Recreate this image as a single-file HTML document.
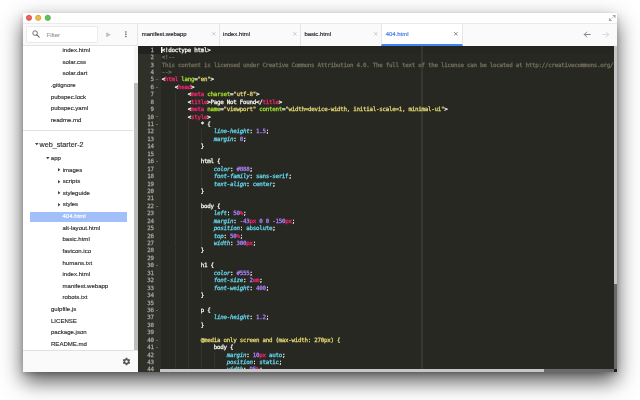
<!DOCTYPE html>
<html lang="en">
<head>
<meta charset="utf-8">
<title>Chrome Dev Editor</title>
<style>
html,body{margin:0;padding:0;}
body{width:640px;height:400px;overflow:hidden;background:#fff;position:relative;font-family:"Liberation Sans",sans-serif;}
#win{will-change:transform;position:absolute;left:23px;top:13px;width:594px;height:359px;background:#fff;box-shadow:0 9px 20px rgba(0,0,0,.68),0 2px 5px rgba(0,0,0,.18);}
#win>div,#win>svg{position:absolute;}
#title{left:0;top:0;width:594px;height:10px;background:#fff;}
.dot{position:absolute;top:1.90px;width:5.8px;height:5.8px;border-radius:50%;box-sizing:border-box;}
#toolbar{left:0;width:594px;top:10px;height:23px;background:#fafafa;border-top:1px solid #ebebeb;box-sizing:border-box;}
#filter{left:3px;top:13px;width:72px;height:17px;background:#fff;border:1px solid #ebebeb;box-sizing:border-box;border-radius:1px;}
#tbb{left:0;top:32px;width:115px;height:1px;background:#e3e3e3;}
#ftxt{left:23.6px;top:17.799999999999997px;font-size:6.1px;line-height:7px;color:#a2a2a2;-webkit-text-stroke:0.17px;}
.tab{top:11px;height:22px;box-sizing:border-box;border-left:1px solid #e6e6e6;font-size:5.95px;color:#1c1c1c;-webkit-text-stroke:0.15px;}
.tab .tl{position:absolute;left:3.4px;top:6.700000000000003px;line-height:7px;white-space:nowrap;}
.tab .tx{position:absolute;right:3.6px;top:8.10px;stroke:#b4b4b4;}
.tab.act{background:#fff;color:#3b78e7;border-bottom:2px solid #4285f4;border-right:1px solid #e6e6e6;}
.tab.act .tx{stroke:#4c4c4c;}
#side{left:0;top:33px;width:115px;height:304px;background:#fff;overflow:hidden;}
.row{position:absolute;font-size:6.05px;line-height:11px;height:11px;color:#2e2e2e;white-space:nowrap;-webkit-text-stroke:0.15px;margin-top:-33px;}
.selt{color:#fff !important;}
.selrow{position:absolute;left:7px;width:97px;height:10px;background:#a1c0fa;margin-top:-33px;}
.ar{position:absolute;top:3.9px;width:0;height:0;border-left:2.4px solid #4a4a4a;border-top:1.7px solid transparent;border-bottom:1.7px solid transparent;}
.ad{position:absolute;top:4.4px;width:0;height:0;border-top:2.2px solid #4a4a4a;border-left:1.8px solid transparent;border-right:1.8px solid transparent;}
#proj{position:absolute;left:16.6px;top:93.69999999999999px;font-size:7.2px;line-height:9px;color:#2e2e2e;white-space:nowrap;-webkit-text-stroke:0.15px;}
#divider{position:absolute;left:0;width:110px;top:84px;height:1px;background:#e2e2e2;}
#sfoot{left:0;top:337px;width:115px;height:22px;background:#fafafa;border-top:1px solid #e0e0e0;box-sizing:border-box;}
#sscroll{left:111px;top:33px;width:4px;height:304px;background:#f6f6f6;}
#sthumb{position:absolute;left:0;right:0;top:37px;bottom:0;background:#bdbdbd;}
#ed{left:115px;top:33px;width:479px;height:326px;background:#272822;overflow:hidden;font-family:"DejaVu Sans Mono","Liberation Mono",monospace;font-size:5.8px;letter-spacing:-0.242px;-webkit-text-stroke:0.25px;}
#ed div,#ed i{position:absolute;}
#gut{left:0;top:0;width:22.5px;bottom:0;background:#2f3129;}
#actg{left:0;top:0;width:22.5px;height:8.14px;background:#222320;}
#actl{left:22.5px;right:0;top:0;height:8.14px;background:#252620;}
.gn{left:0;width:15.7px;text-align:right;line-height:7.437px;height:7.437px;color:#a6a7a0;white-space:pre;}
.fold{left:17.6px;top:2.8px;width:2px;height:0.8px;background:#62635c;}
.ln{left:23.7px;line-height:7.437px;height:7.437px;white-space:pre;color:#f8f8f2;}
.t{color:#f8f8f2} .c{color:#75715e} .k{color:#f92672} .a{color:#a6e22e} .s{color:#e6db74}
.p{color:#66d9ef;font-style:italic} .u{color:#66d9ef} .n{color:#ae81ff}
#lines{left:0;top:0.7px;}
#gnums{left:0;top:0.7px;}
#pm{left:283px;top:0;bottom:0;width:2px;background:#363731;}
.ig{width:0.5px;background:#33342e;}
#cursor{left:23.00px;top:1px;width:1px;height:6px;background:#f8f8f0;box-shadow:1px 0 0 rgba(248,248,240,.45);}
#vs{right:0;top:0;width:3.5px;bottom:0;background:#6a6a6a;}
#vt{left:0;right:0;top:0;height:237.8px;background:#c6c6c6;}
#hs{left:22px;right:3.5px;bottom:0;height:3.5px;background:#6a6a6a;}
#ht{left:0;top:0;bottom:0;width:383.79999999999995px;background:#c6c6c6;}
#corner{right:0;bottom:0;width:3.5px;height:3.5px;background:#1e1e1e;}
svg{position:absolute;overflow:visible;}
</style>
</head>
<body>
<div id="win">
  <div id="title">
    <svg style="left:0;top:0" width="40" height="10" viewBox="0 0 40 10">
      <circle cx="6" cy="4.8" r="2.600" fill="#f4615b" stroke="#cb3f3a" stroke-width="0.700"/>
      <circle cx="15.2" cy="4.8" r="2.600" fill="#f6b93f" stroke="#cc922b" stroke-width="0.700"/>
      <circle cx="24.8" cy="4.8" r="2.600" fill="#62c656" stroke="#3f9b39" stroke-width="0.700"/>
    </svg>
    <svg style="left:586px;top:2px" width="6.500" height="6" viewBox="0 0 65 60"><path d="M33 0H65V32zM0 28V60H32z" fill="#a3a3a3"/><path d="M50 15L15 45" stroke="#b5b5b5" stroke-width="6" fill="none"/></svg>
  </div>
  <div id="toolbar"></div>
  <div id="tbb"></div>
  <div id="filter"></div>
  <svg style="left:9.200000000000003px;top:17.1px" width="8" height="8" viewBox="0 0 16 16"><circle cx="6.200" cy="6.200" r="4.600" fill="none" stroke="#5c5c5c" stroke-width="1.700"/><path d="M9.800 9.800L14.500 14.500" stroke="#5c5c5c" stroke-width="2.100" stroke-linecap="round"/></svg>
  <div id="ftxt">Filter</div>
  <svg style="left:82.6px;top:18.5px" width="5" height="5.500" viewBox="0 0 10 11"><path d="M0.500 0.300L9.500 5.500L0.500 10.700z" fill="#bdbdbd"/></svg>
  <svg style="left:102.4px;top:18.3px" width="1.800" height="6.400" viewBox="0 0 3.600 12.800"><circle cx="1.800" cy="1.800" r="1.500" fill="#4a4a4a"/><circle cx="1.800" cy="6.400" r="1.500" fill="#4a4a4a"/><circle cx="1.800" cy="11" r="1.500" fill="#4a4a4a"/></svg>
  <div class="tab" style="left:114.40px;width:81.30px"><span class="tl">manifest.webapp</span><svg class="tx" width="3.600" height="3.600" viewBox="0 0 36 36"><path d="M1 1L35 35M35 1L1 35" fill="none" stroke-width="6.500"/></svg></div><div class="tab" style="left:195.70px;width:81.30px"><span class="tl">index.html</span><svg class="tx" width="3.600" height="3.600" viewBox="0 0 36 36"><path d="M1 1L35 35M35 1L1 35" fill="none" stroke-width="6.500"/></svg></div><div class="tab" style="left:277.00px;width:81.30px"><span class="tl">basic.html</span><svg class="tx" width="3.600" height="3.600" viewBox="0 0 36 36"><path d="M1 1L35 35M35 1L1 35" fill="none" stroke-width="6.500"/></svg></div><div class="tab act" style="left:358.30px;width:81.30px"><span class="tl">404.html</span><svg class="tx" width="3.600" height="3.600" viewBox="0 0 36 36"><path d="M1 1L35 35M35 1L1 35" fill="none" stroke-width="6.500"/></svg></div>
  <svg style="left:560px;top:17px" width="8" height="9" viewBox="0 -1 16 18"><path d="M15 8H3M8 2.500L2.500 8l5.500 5.500" fill="none" stroke="#4a4a4a" stroke-width="1.350"/></svg>
  <svg style="left:579px;top:17px" width="8" height="9" viewBox="0 -1 16 18"><path d="M1 8h12M8 2.500l5.500 5.500-5.500 5.500" fill="none" stroke="#c6c6c6" stroke-width="1.350"/></svg>
  <div id="side">
    <div class="row" style="top:32.00px;left:39.50px">index.html</div><div class="row" style="top:43.50px;left:39.50px">solar.css</div><div class="row" style="top:55.00px;left:39.50px">solar.dart</div><div class="row" style="top:67.00px;left:27.80px">.gitignore</div><div class="row" style="top:78.50px;left:27.80px">pubspec.lock</div><div class="row" style="top:90.00px;left:27.80px">pubspec.yaml</div><div class="row" style="top:102.00px;left:27.80px">readme.md</div><div class="row" style="top:139.80px;left:27.80px"><svg style="left:-4.70px;top:4.40px" width="3.600" height="2.200" viewBox="0 0 36 22"><path d="M0 0H36L18 22z" fill="#444"/></svg>app</div><div class="row" style="top:151.50px;left:39.70px"><svg style="left:-4.40px;top:3.90px" width="2.400" height="3.400" viewBox="0 0 24 34"><path d="M0 0V34L24 17z" fill="#444"/></svg>images</div><div class="row" style="top:163.00px;left:39.70px"><svg style="left:-4.40px;top:3.90px" width="2.400" height="3.400" viewBox="0 0 24 34"><path d="M0 0V34L24 17z" fill="#444"/></svg>scripts</div><div class="row" style="top:174.50px;left:39.70px"><svg style="left:-4.40px;top:3.90px" width="2.400" height="3.400" viewBox="0 0 24 34"><path d="M0 0V34L24 17z" fill="#444"/></svg>styleguide</div><div class="row" style="top:186.00px;left:39.70px"><svg style="left:-4.40px;top:3.90px" width="2.400" height="3.400" viewBox="0 0 24 34"><path d="M0 0V34L24 17z" fill="#444"/></svg>styles</div><div class="selrow" style="top:199.00px"></div><div class="row selt" style="top:198.00px;left:39.50px">404.html</div><div class="row" style="top:209.50px;left:39.50px">alt-layout.html</div><div class="row" style="top:221.00px;left:39.50px">basic.html</div><div class="row" style="top:232.50px;left:39.50px">favicon.ico</div><div class="row" style="top:244.50px;left:39.50px">humans.txt</div><div class="row" style="top:256.00px;left:39.50px">index.html</div><div class="row" style="top:267.50px;left:39.50px">manifest.webapp</div><div class="row" style="top:279.20px;left:39.50px">robots.txt</div><div class="row" style="top:290.80px;left:28.00px">gulpfile.js</div><div class="row" style="top:302.50px;left:28.00px">LICENSE</div><div class="row" style="top:314.20px;left:28.00px">package.json</div><div class="row" style="top:325.80px;left:28.00px">README.md</div>
    <div id="divider"></div>
    <div id="proj"><svg style="left:-5.00px;top:3.20px" width="3.600" height="2.200" viewBox="0 0 36 22"><path d="M0 0H36L18 22z" fill="#444"/></svg>web_starter-2</div>
  </div>
  <div id="sscroll"><div id="sthumb"></div></div>
  <div id="sfoot">
    <svg style="left:98.9px;top:5.6px" width="9" height="9" viewBox="0 0 24 24"><path fill="#555" d="M19.430 12.980c.040-.320.070-.640.070-.980s-.030-.660-.070-.980l2.110-1.650c.190-.150.240-.420.120-.640l-2-3.460c-.120-.220-.390-.300-.610-.220l-2.490 1c-.520-.400-1.080-.730-1.690-.980l-.380-2.650C14.460 2.180 14.250 2 14 2h-4c-.250 0-.460.180-.490.420l-.380 2.650c-.610.250-1.170.590-1.690.980l-2.490-1c-.230-.090-.490 0-.610.220l-2 3.460c-.130.220-.070.490.120.640l2.110 1.650c-.040.320-.070.650-.070.980s.030.660.070.980l-2.110 1.650c-.190.150-.240.420-.120.640l2 3.460c.120.220.390.300.610.220l2.490-1c.520.400 1.080.730 1.690.980l.380 2.650c.030.240.240.420.490.420h4c.250 0 .460-.180.490-.420l.380-2.650c.610-.250 1.170-.590 1.690-.980l2.490 1c.230.090.490 0 .610-.220l2-3.460c.120-.220.070-.490-.120-.640l-2.110-1.650zM12 15.500c-1.930 0-3.500-1.570-3.500-3.500s1.570-3.500 3.500-3.500 3.500 1.570 3.500 3.500-1.570 3.500-3.500 3.500z"/></svg>
  </div>
  <div id="ed">
    <div id="gut"></div>
    <div id="actg"></div>
    <div id="actl"></div>
    <div id="pm"></div>
    <div id="guides"><i class="ig" style="left:36.70px;top:45.32px;height:7.44px"></i><i class="ig" style="left:36.70px;top:52.76px;height:7.44px"></i><i class="ig" style="left:36.70px;top:60.20px;height:7.44px"></i><i class="ig" style="left:36.70px;top:67.63px;height:7.44px"></i><i class="ig" style="left:36.70px;top:75.07px;height:7.44px"></i><i class="ig" style="left:49.70px;top:75.07px;height:7.44px"></i><i class="ig" style="left:36.70px;top:82.51px;height:7.44px"></i><i class="ig" style="left:49.70px;top:82.51px;height:7.44px"></i><i class="ig" style="left:62.70px;top:82.51px;height:7.44px"></i><i class="ig" style="left:36.70px;top:89.94px;height:7.44px"></i><i class="ig" style="left:49.70px;top:89.94px;height:7.44px"></i><i class="ig" style="left:62.70px;top:89.94px;height:7.44px"></i><i class="ig" style="left:36.70px;top:97.38px;height:7.44px"></i><i class="ig" style="left:49.70px;top:97.38px;height:7.44px"></i><i class="ig" style="left:36.70px;top:104.82px;height:7.44px"></i><i class="ig" style="left:49.70px;top:104.82px;height:7.44px"></i><i class="ig" style="left:36.70px;top:112.26px;height:7.44px"></i><i class="ig" style="left:49.70px;top:112.26px;height:7.44px"></i><i class="ig" style="left:36.70px;top:119.69px;height:7.44px"></i><i class="ig" style="left:49.70px;top:119.69px;height:7.44px"></i><i class="ig" style="left:62.70px;top:119.69px;height:7.44px"></i><i class="ig" style="left:36.70px;top:127.13px;height:7.44px"></i><i class="ig" style="left:49.70px;top:127.13px;height:7.44px"></i><i class="ig" style="left:62.70px;top:127.13px;height:7.44px"></i><i class="ig" style="left:36.70px;top:134.57px;height:7.44px"></i><i class="ig" style="left:49.70px;top:134.57px;height:7.44px"></i><i class="ig" style="left:62.70px;top:134.57px;height:7.44px"></i><i class="ig" style="left:36.70px;top:142.00px;height:7.44px"></i><i class="ig" style="left:49.70px;top:142.00px;height:7.44px"></i><i class="ig" style="left:36.70px;top:149.44px;height:7.44px"></i><i class="ig" style="left:49.70px;top:149.44px;height:7.44px"></i><i class="ig" style="left:36.70px;top:156.88px;height:7.44px"></i><i class="ig" style="left:49.70px;top:156.88px;height:7.44px"></i><i class="ig" style="left:36.70px;top:164.31px;height:7.44px"></i><i class="ig" style="left:49.70px;top:164.31px;height:7.44px"></i><i class="ig" style="left:62.70px;top:164.31px;height:7.44px"></i><i class="ig" style="left:36.70px;top:171.75px;height:7.44px"></i><i class="ig" style="left:49.70px;top:171.75px;height:7.44px"></i><i class="ig" style="left:62.70px;top:171.75px;height:7.44px"></i><i class="ig" style="left:36.70px;top:179.19px;height:7.44px"></i><i class="ig" style="left:49.70px;top:179.19px;height:7.44px"></i><i class="ig" style="left:62.70px;top:179.19px;height:7.44px"></i><i class="ig" style="left:36.70px;top:186.62px;height:7.44px"></i><i class="ig" style="left:49.70px;top:186.62px;height:7.44px"></i><i class="ig" style="left:62.70px;top:186.62px;height:7.44px"></i><i class="ig" style="left:36.70px;top:194.06px;height:7.44px"></i><i class="ig" style="left:49.70px;top:194.06px;height:7.44px"></i><i class="ig" style="left:62.70px;top:194.06px;height:7.44px"></i><i class="ig" style="left:36.70px;top:201.50px;height:7.44px"></i><i class="ig" style="left:49.70px;top:201.50px;height:7.44px"></i><i class="ig" style="left:36.70px;top:208.94px;height:7.44px"></i><i class="ig" style="left:49.70px;top:208.94px;height:7.44px"></i><i class="ig" style="left:36.70px;top:216.37px;height:7.44px"></i><i class="ig" style="left:49.70px;top:216.37px;height:7.44px"></i><i class="ig" style="left:36.70px;top:223.81px;height:7.44px"></i><i class="ig" style="left:49.70px;top:223.81px;height:7.44px"></i><i class="ig" style="left:62.70px;top:223.81px;height:7.44px"></i><i class="ig" style="left:36.70px;top:231.25px;height:7.44px"></i><i class="ig" style="left:49.70px;top:231.25px;height:7.44px"></i><i class="ig" style="left:62.70px;top:231.25px;height:7.44px"></i><i class="ig" style="left:36.70px;top:238.68px;height:7.44px"></i><i class="ig" style="left:49.70px;top:238.68px;height:7.44px"></i><i class="ig" style="left:62.70px;top:238.68px;height:7.44px"></i><i class="ig" style="left:36.70px;top:246.12px;height:7.44px"></i><i class="ig" style="left:49.70px;top:246.12px;height:7.44px"></i><i class="ig" style="left:36.70px;top:253.56px;height:7.44px"></i><i class="ig" style="left:49.70px;top:253.56px;height:7.44px"></i><i class="ig" style="left:36.70px;top:261.00px;height:7.44px"></i><i class="ig" style="left:49.70px;top:261.00px;height:7.44px"></i><i class="ig" style="left:36.70px;top:268.43px;height:7.44px"></i><i class="ig" style="left:49.70px;top:268.43px;height:7.44px"></i><i class="ig" style="left:62.70px;top:268.43px;height:7.44px"></i><i class="ig" style="left:36.70px;top:275.87px;height:7.44px"></i><i class="ig" style="left:49.70px;top:275.87px;height:7.44px"></i><i class="ig" style="left:36.70px;top:283.31px;height:7.44px"></i><i class="ig" style="left:49.70px;top:283.31px;height:7.44px"></i><i class="ig" style="left:36.70px;top:290.74px;height:7.44px"></i><i class="ig" style="left:49.70px;top:290.74px;height:7.44px"></i><i class="ig" style="left:36.70px;top:298.18px;height:7.44px"></i><i class="ig" style="left:49.70px;top:298.18px;height:7.44px"></i><i class="ig" style="left:62.70px;top:298.18px;height:7.44px"></i><i class="ig" style="left:36.70px;top:305.62px;height:7.44px"></i><i class="ig" style="left:49.70px;top:305.62px;height:7.44px"></i><i class="ig" style="left:62.70px;top:305.62px;height:7.44px"></i><i class="ig" style="left:75.70px;top:305.62px;height:7.44px"></i><i class="ig" style="left:36.70px;top:313.05px;height:7.44px"></i><i class="ig" style="left:49.70px;top:313.05px;height:7.44px"></i><i class="ig" style="left:62.70px;top:313.05px;height:7.44px"></i><i class="ig" style="left:75.70px;top:313.05px;height:7.44px"></i><i class="ig" style="left:36.70px;top:320.49px;height:7.44px"></i><i class="ig" style="left:49.70px;top:320.49px;height:7.44px"></i><i class="ig" style="left:62.70px;top:320.49px;height:7.44px"></i><i class="ig" style="left:75.70px;top:320.49px;height:7.44px"></i><i class="ig" style="left:36.70px;top:327.93px;height:7.44px"></i><i class="ig" style="left:49.70px;top:327.93px;height:7.44px"></i><i class="ig" style="left:62.70px;top:327.93px;height:7.44px"></i></div>
    <div id="gnums"><div class="gn" style="top:0.000px">1</div><div class="gn" style="top:7.437px">2</div><div class="gn" style="top:14.874px">3</div><div class="gn" style="top:22.311px">4</div><div class="gn" style="top:29.748px">5<i class="fold"></i></div><div class="gn" style="top:37.185px">6<i class="fold"></i></div><div class="gn" style="top:44.622px">7</div><div class="gn" style="top:52.059px">8</div><div class="gn" style="top:59.496px">9</div><div class="gn" style="top:66.933px">10<i class="fold"></i></div><div class="gn" style="top:74.370px">11<i class="fold"></i></div><div class="gn" style="top:81.807px">12</div><div class="gn" style="top:89.244px">13</div><div class="gn" style="top:96.681px">14</div><div class="gn" style="top:104.118px">15</div><div class="gn" style="top:111.555px">16<i class="fold"></i></div><div class="gn" style="top:118.992px">17</div><div class="gn" style="top:126.429px">18</div><div class="gn" style="top:133.866px">19</div><div class="gn" style="top:141.303px">20</div><div class="gn" style="top:148.740px">21</div><div class="gn" style="top:156.177px">22<i class="fold"></i></div><div class="gn" style="top:163.614px">23</div><div class="gn" style="top:171.051px">24</div><div class="gn" style="top:178.488px">25</div><div class="gn" style="top:185.925px">26</div><div class="gn" style="top:193.362px">27</div><div class="gn" style="top:200.799px">28</div><div class="gn" style="top:208.236px">29</div><div class="gn" style="top:215.673px">30<i class="fold"></i></div><div class="gn" style="top:223.110px">31</div><div class="gn" style="top:230.547px">32</div><div class="gn" style="top:237.984px">33</div><div class="gn" style="top:245.421px">34</div><div class="gn" style="top:252.858px">35</div><div class="gn" style="top:260.295px">36<i class="fold"></i></div><div class="gn" style="top:267.732px">37</div><div class="gn" style="top:275.169px">38</div><div class="gn" style="top:282.606px">39</div><div class="gn" style="top:290.043px">40<i class="fold"></i></div><div class="gn" style="top:297.480px">41<i class="fold"></i></div><div class="gn" style="top:304.917px">42</div><div class="gn" style="top:312.354px">43</div><div class="gn" style="top:319.791px">44</div><div class="gn" style="top:327.228px">45</div></div>
    <div id="lines"><div class="ln" style="top:0.000px"><span class="t">&lt;!doctype html&gt;</span></div><div class="ln" style="top:7.437px"><span class="c">&lt;!--</span></div><div class="ln" style="top:14.874px"><span class="c">This content is licensed under Creative Commons Attribution 4.0. The full text of the license can be located at http://creativecommons.org/licenses/by/4.0/</span></div><div class="ln" style="top:22.311px"><span class="c">--&gt;</span></div><div class="ln" style="top:29.748px"><span class="t">&lt;</span><span class="k">html</span><span class="t"> </span><span class="a">lang</span><span class="t">=</span><span class="s">"en"</span><span class="t">&gt;</span></div><div class="ln" style="top:37.185px"><span class="t">    &lt;</span><span class="k">head</span><span class="t">&gt;</span></div><div class="ln" style="top:44.622px"><span class="t">        &lt;</span><span class="k">meta</span><span class="t"> </span><span class="a">charset</span><span class="t">=</span><span class="s">"utf-8"</span><span class="t">&gt;</span></div><div class="ln" style="top:52.059px"><span class="t">        &lt;</span><span class="k">title</span><span class="t">&gt;Page Not Found&lt;/</span><span class="k">title</span><span class="t">&gt;</span></div><div class="ln" style="top:59.496px"><span class="t">        &lt;</span><span class="k">meta</span><span class="t"> </span><span class="a">name</span><span class="t">=</span><span class="s">"viewport"</span><span class="t"> </span><span class="a">content</span><span class="t">=</span><span class="s">"width=device-width, initial-scale=1, minimal-ui"</span><span class="t">&gt;</span></div><div class="ln" style="top:66.933px"><span class="t">        &lt;</span><span class="k">style</span><span class="t">&gt;</span></div><div class="ln" style="top:74.370px"><span class="t">            * {</span></div><div class="ln" style="top:81.807px"><span class="t">                </span><span class="p">line-height</span><span class="t">: </span><span class="n">1.5</span><span class="t">;</span></div><div class="ln" style="top:89.244px"><span class="t">                </span><span class="p">margin</span><span class="t">: </span><span class="n">0</span><span class="t">;</span></div><div class="ln" style="top:96.681px"><span class="t">            }</span></div><div class="ln" style="top:104.118px"></div><div class="ln" style="top:111.555px"><span class="t">            html {</span></div><div class="ln" style="top:118.992px"><span class="t">                </span><span class="p">color</span><span class="t">: </span><span class="n">#888</span><span class="t">;</span></div><div class="ln" style="top:126.429px"><span class="t">                </span><span class="p">font-family</span><span class="t">: </span><span class="u">sans-serif</span><span class="t">;</span></div><div class="ln" style="top:133.866px"><span class="t">                </span><span class="p">text-align</span><span class="t">: </span><span class="u">center</span><span class="t">;</span></div><div class="ln" style="top:141.303px"><span class="t">            }</span></div><div class="ln" style="top:148.740px"></div><div class="ln" style="top:156.177px"><span class="t">            body {</span></div><div class="ln" style="top:163.614px"><span class="t">                </span><span class="p">left</span><span class="t">: </span><span class="n">50</span><span class="k">%</span><span class="t">;</span></div><div class="ln" style="top:171.051px"><span class="t">                </span><span class="p">margin</span><span class="t">: </span><span class="n">-43</span><span class="k">px</span><span class="t"> </span><span class="n">0</span><span class="t"> </span><span class="n">0</span><span class="t"> </span><span class="n">-150</span><span class="k">px</span><span class="t">;</span></div><div class="ln" style="top:178.488px"><span class="t">                </span><span class="p">position</span><span class="t">: </span><span class="u">absolute</span><span class="t">;</span></div><div class="ln" style="top:185.925px"><span class="t">                </span><span class="p">top</span><span class="t">: </span><span class="n">50</span><span class="k">%</span><span class="t">;</span></div><div class="ln" style="top:193.362px"><span class="t">                </span><span class="p">width</span><span class="t">: </span><span class="n">300</span><span class="k">px</span><span class="t">;</span></div><div class="ln" style="top:200.799px"><span class="t">            }</span></div><div class="ln" style="top:208.236px"></div><div class="ln" style="top:215.673px"><span class="t">            h1 {</span></div><div class="ln" style="top:223.110px"><span class="t">                </span><span class="p">color</span><span class="t">: </span><span class="n">#555</span><span class="t">;</span></div><div class="ln" style="top:230.547px"><span class="t">                </span><span class="p">font-size</span><span class="t">: </span><span class="n">2</span><span class="k">em</span><span class="t">;</span></div><div class="ln" style="top:237.984px"><span class="t">                </span><span class="p">font-weight</span><span class="t">: </span><span class="n">400</span><span class="t">;</span></div><div class="ln" style="top:245.421px"><span class="t">            }</span></div><div class="ln" style="top:252.858px"></div><div class="ln" style="top:260.295px"><span class="t">            p {</span></div><div class="ln" style="top:267.732px"><span class="t">                </span><span class="p">line-height</span><span class="t">: </span><span class="n">1.2</span><span class="t">;</span></div><div class="ln" style="top:275.169px"><span class="t">            }</span></div><div class="ln" style="top:282.606px"></div><div class="ln" style="top:290.043px"><span class="t">            </span><span class="s">@media only screen and (max-width: 270px) {</span></div><div class="ln" style="top:297.480px"><span class="t">                body {</span></div><div class="ln" style="top:304.917px"><span class="t">                    </span><span class="p">margin</span><span class="t">: </span><span class="n">10</span><span class="k">px</span><span class="t"> </span><span class="u">auto</span><span class="t">;</span></div><div class="ln" style="top:312.354px"><span class="t">                    </span><span class="p">position</span><span class="t">: </span><span class="u">static</span><span class="t">;</span></div><div class="ln" style="top:319.791px"><span class="t">                    </span><span class="p">width</span><span class="t">: </span><span class="n">95</span><span class="k">%</span><span class="t">;</span></div><div class="ln" style="top:327.228px"><span class="t">                }</span></div></div>
    <div id="cursor"></div>
    <div id="vs"><div id="vt"></div></div>
    <div id="hs"><div id="ht"></div></div>
    <div id="corner"></div>
  </div>
</div>
</body>
</html>
